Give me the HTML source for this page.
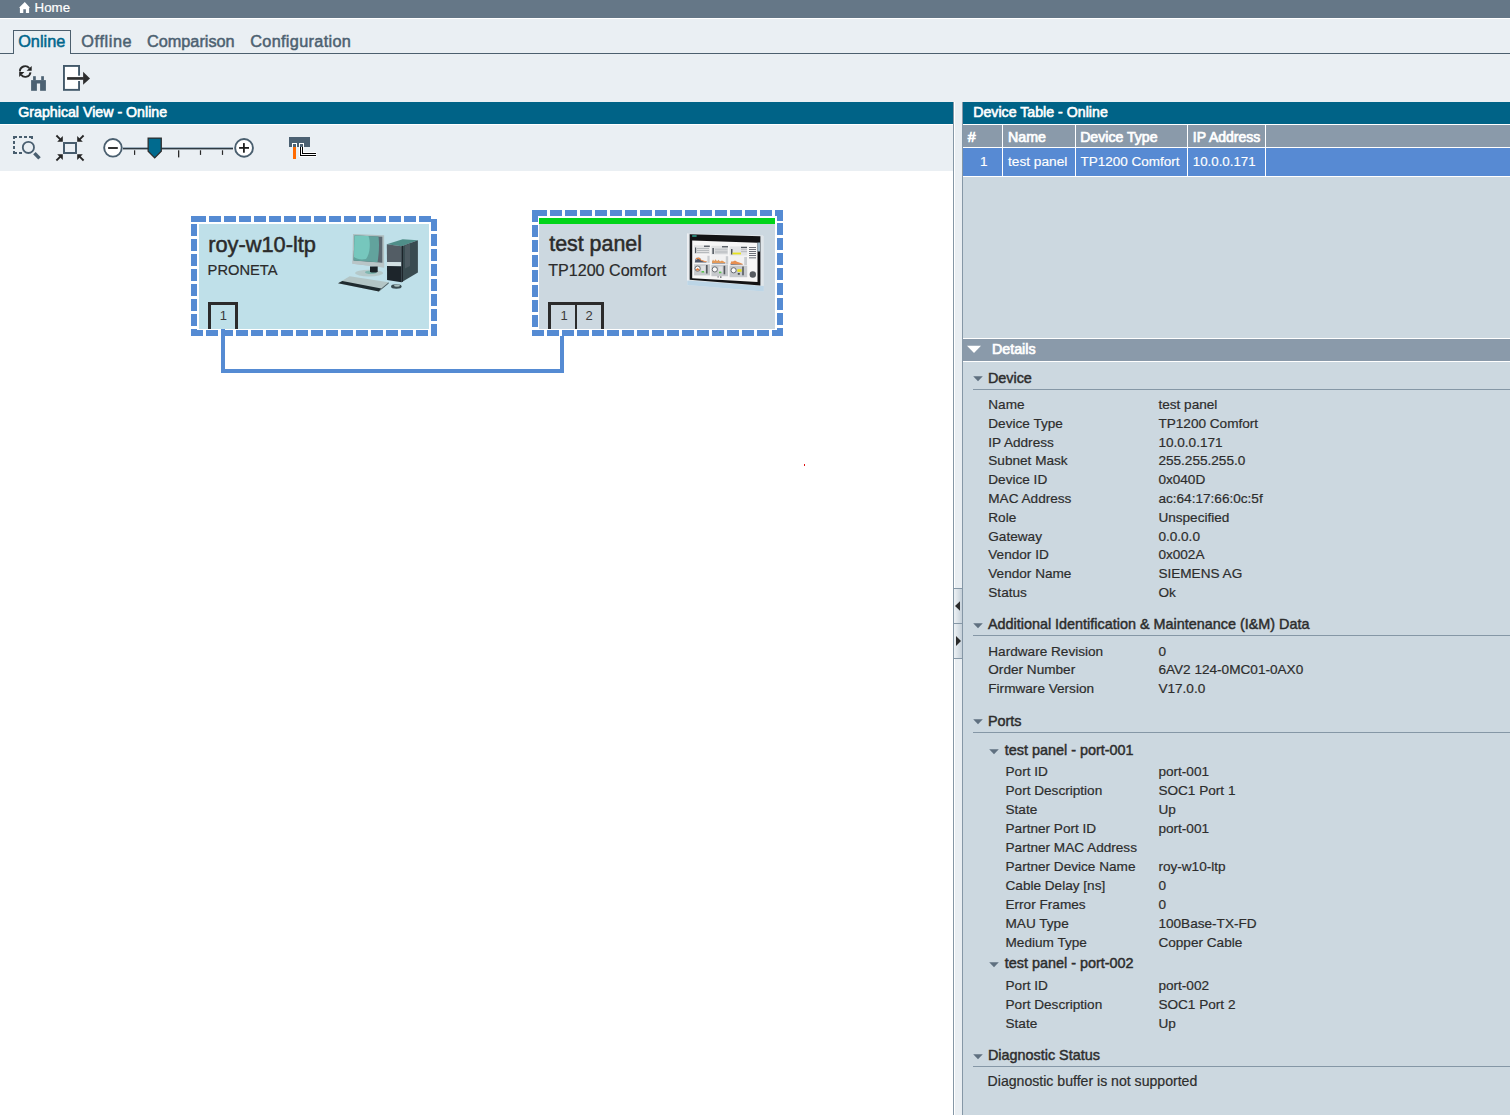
<!DOCTYPE html>
<html><head><meta charset="utf-8"><style>
html,body{margin:0;padding:0;}
body{width:1510px;height:1115px;position:relative;overflow:hidden;background:#fff;font-family:"Liberation Sans", sans-serif;}
.t{position:absolute;white-space:nowrap;font-family:"Liberation Sans", sans-serif;}
svg{overflow:visible}
</style></head><body>
<div style="position:absolute;left:0px;top:0px;width:1510px;height:18px;background:#657787;"></div>
<div style="position:absolute;left:0px;top:18px;width:1510px;height:1px;background:#ffffff;"></div>
<div style="position:absolute;left:0px;top:19px;width:1510px;height:83px;background:#eaeff3;"></div>
<svg style="position:absolute;left:0px;top:0px" width="40" height="18" viewBox="0 0 40 18"><path d="M24.8 2.1 L30 7.8 L29.1 7.8 V13 H25.9 V9.3 H23.3 V13 H19.9 V7.8 H19 Z" fill="#fff"/></svg>
<div class="t" style="left:34.60px;top:0.74px;font-size:13.3px;line-height:13.3px;font-weight:400;color:#ffffff;-webkit-text-stroke:0.2px #ffffff;">Home</div>
<div style="position:absolute;left:0px;top:53px;width:13px;height:1px;background:#4c5f6e;"></div>
<div style="position:absolute;left:71px;top:53px;width:1439px;height:1px;background:#4c5f6e;"></div>
<div style="position:absolute;left:13px;top:30px;width:56px;height:23px;border:1px solid #4c5f6e;border-bottom:none;background:#eaeff3"></div>
<div class="t" style="left:18.20px;top:33.20px;font-size:16.3px;line-height:16.3px;font-weight:400;color:#00668c;-webkit-text-stroke:0.5px #00668c;">Online</div>
<div class="t" style="left:81.30px;top:33.20px;font-size:16.3px;line-height:16.3px;font-weight:400;color:#4d6171;letter-spacing:0.6px;-webkit-text-stroke:0.5px #4d6171;">Offline</div>
<div class="t" style="left:146.90px;top:33.20px;font-size:16.3px;line-height:16.3px;font-weight:400;color:#4d6171;-webkit-text-stroke:0.5px #4d6171;">Comparison</div>
<div class="t" style="left:250.20px;top:33.20px;font-size:16.3px;line-height:16.3px;font-weight:400;color:#4d6171;letter-spacing:0.32px;-webkit-text-stroke:0.5px #4d6171;">Configuration</div>
<svg style="position:absolute;left:14px;top:60px" width="36" height="35" viewBox="0 0 36 35">
<path d="M5.9 11.5 A5.3 5.3 0 0 1 15.26 8.09" fill="none" stroke="#2a2a2a" stroke-width="1.9"/>
<path d="M17.7 6 L17.7 10.8 L12.6 10.8 Z" fill="#222"/>
<path d="M16.5 12.3 A5.3 5.3 0 0 1 7.14 14.91" fill="none" stroke="#2a2a2a" stroke-width="1.9"/>
<path d="M5.2 12.1 L5.2 17.1 L10.4 12.1 Z" fill="#222"/>
<rect x="19.1" y="16.2" width="2.7" height="4" fill="#4c6172"/>
<rect x="27.2" y="16.2" width="2.7" height="4" fill="#4c6172"/>
<rect x="17.1" y="20.1" width="14.8" height="10.7" fill="#4c6172"/>
<rect x="22.9" y="23.5" width="3.2" height="7.5" fill="#eaeff3"/>
</svg>
<svg style="position:absolute;left:58px;top:60px" width="36" height="35" viewBox="0 0 36 35">
<rect x="5.95" y="5.95" width="15.1" height="23.9" fill="#fff" stroke="#43596a" stroke-width="1.9"/>
<rect x="19.9" y="15.7" width="2.4" height="5.3" fill="#fff"/>
<rect x="9.1" y="17.1" width="16.5" height="2.7" fill="#2e2e2e"/>
<path d="M25.1 11.8 L32 18.4 L25.1 24.8 Z" fill="#2e2e2e"/>
</svg>
<div style="position:absolute;left:0px;top:102px;width:953px;height:22px;background:#006387;"></div>
<div style="position:absolute;left:0px;top:124px;width:953px;height:1px;background:#ffffff;"></div>
<div style="position:absolute;left:0px;top:125px;width:953px;height:46px;background:#eaeff3;"></div>
<div style="position:absolute;left:0px;top:171px;width:953px;height:944px;background:#ffffff;"></div>
<div class="t" style="left:18.30px;top:104.88px;font-size:14.2px;line-height:14.2px;font-weight:400;color:#ffffff;-webkit-text-stroke:0.6px #ffffff;">Graphical View - Online</div>
<div style="position:absolute;left:953px;top:102px;width:1px;height:1013px;background:#8597a6;"></div>
<div style="position:absolute;left:954px;top:102px;width:1px;height:1013px;background:#ffffff;"></div>
<div style="position:absolute;left:955px;top:102px;width:7px;height:1013px;background:#e9eef2;"></div>
<div style="position:absolute;left:962px;top:102px;width:1px;height:1013px;background:#8597a6;"></div>
<svg style="position:absolute;left:8px;top:130px" width="36" height="35" viewBox="0 0 36 35">
<g fill="#485d6e">
<rect x="5" y="6" width="4" height="2"/><rect x="5" y="6" width="2" height="3"/>
<rect x="11" y="6" width="3" height="2"/><rect x="16" y="6" width="3" height="2"/>
<rect x="21" y="6" width="4" height="2"/><rect x="23" y="6" width="2" height="3"/>
<rect x="5" y="11" width="2" height="3"/><rect x="5" y="16" width="2" height="3"/>
<rect x="5" y="21" width="2" height="3"/><rect x="5" y="22" width="4" height="2"/>
<rect x="11" y="22" width="3" height="2"/>
</g>
<circle cx="20.4" cy="17.4" r="5.6" fill="none" stroke="#4a5f70" stroke-width="1.8"/>
<path d="M26.4 23.1 L31.5 28.4" stroke="#4a5f70" stroke-width="3.5"/>
</svg>
<svg style="position:absolute;left:52px;top:130px" width="36" height="35" viewBox="0 0 36 35">
<rect x="12" y="13" width="12" height="10" fill="none" stroke="#475c6d" stroke-width="2"/>
<path d="M4.4 5.5 L8.6 9.7" stroke="#262626" stroke-width="1.8"/><path d="M5.2 11.8 L10.8 11.8 L10.8 6.1 Z" fill="#262626"/>
<path d="M31.6 5.5 L27.4 9.7" stroke="#262626" stroke-width="1.8"/><path d="M30.8 11.8 L25.2 11.8 L25.2 6.1 Z" fill="#262626"/>
<path d="M4.4 30.5 L8.6 26.3" stroke="#262626" stroke-width="1.8"/><path d="M5.2 24.2 L10.8 24.2 L10.8 29.9 Z" fill="#262626"/>
<path d="M31.6 30.5 L27.4 26.3" stroke="#262626" stroke-width="1.8"/><path d="M30.8 24.2 L25.2 24.2 L25.2 29.9 Z" fill="#262626"/>
</svg>
<svg style="position:absolute;left:100px;top:133px" width="160" height="30" viewBox="0 0 160 30">
<rect x="23" y="14.3" width="110" height="0.9" fill="#7f98a8"/>
<rect x="23" y="15" width="110" height="1.4" fill="#2f3a42"/>
<rect x="34" y="17.3" width="1.2" height="4.6" fill="#2a2a2a"/>
<rect x="78" y="17.3" width="1.3" height="7.1" fill="#2a2a2a"/>
<rect x="99.9" y="17.3" width="1.2" height="4.6" fill="#2a2a2a"/>
<rect x="121.9" y="17.3" width="1.2" height="4.6" fill="#2a2a2a"/>
<circle cx="12.95" cy="14.85" r="8.8" fill="#fff" stroke="#4a5f6f" stroke-width="1.9"/>
<rect x="8.1" y="14.1" width="9.7" height="1.8" fill="#1e1e1e"/>
<circle cx="144.05" cy="14.9" r="8.9" fill="#fff" stroke="#4a5f6f" stroke-width="1.9"/>
<rect x="139.1" y="14" width="9.9" height="1.8" fill="#1e1e1e"/>
<rect x="143" y="10.1" width="1.8" height="9.6" fill="#1e1e1e"/>
<path d="M48.15 5.05 H61.25 V18.3 L54.7 24.9 L48.15 18.3 Z" fill="#006a8e" stroke="#2e2e2e" stroke-width="1.3"/>
</svg>
<svg style="position:absolute;left:284px;top:132px" width="36" height="32" viewBox="0 0 36 32">
<rect x="5" y="5" width="21" height="10" fill="#4c6172"/>
<rect x="8" y="11" width="5" height="4" fill="#fff"/><rect x="9" y="12" width="3" height="3" fill="#4c6172"/>
<rect x="15" y="11" width="5" height="4" fill="#fff"/><rect x="16" y="12" width="3" height="3" fill="#4c6172"/>
<rect x="9" y="15" width="3" height="12" fill="#ff6a00"/>
<path d="M15 15 H20 V20 H32.5 V25 H15 Z" fill="#fff"/>
<path d="M16 15 V24 H32 V23 H17 V15 Z" fill="#000"/>
<path d="M18 15 V22 H32 V21 H19 V15 Z" fill="#000"/>
</svg>
<div style="position:absolute;left:199px;top:224px;width:230px;height:105px;background:#bfe0e9;"></div>
<div style="position:absolute;left:191px;top:216px;width:15px;height:6px;background:#558bd3;"></div>
<div style="position:absolute;left:209px;top:216px;width:12px;height:6px;background:#558bd3;"></div>
<div style="position:absolute;left:224px;top:216px;width:12px;height:6px;background:#558bd3;"></div>
<div style="position:absolute;left:239px;top:216px;width:12px;height:6px;background:#558bd3;"></div>
<div style="position:absolute;left:254px;top:216px;width:12px;height:6px;background:#558bd3;"></div>
<div style="position:absolute;left:269px;top:216px;width:12px;height:6px;background:#558bd3;"></div>
<div style="position:absolute;left:284px;top:216px;width:12px;height:6px;background:#558bd3;"></div>
<div style="position:absolute;left:299px;top:216px;width:12px;height:6px;background:#558bd3;"></div>
<div style="position:absolute;left:314px;top:216px;width:12px;height:6px;background:#558bd3;"></div>
<div style="position:absolute;left:329px;top:216px;width:12px;height:6px;background:#558bd3;"></div>
<div style="position:absolute;left:344px;top:216px;width:12px;height:6px;background:#558bd3;"></div>
<div style="position:absolute;left:359px;top:216px;width:12px;height:6px;background:#558bd3;"></div>
<div style="position:absolute;left:374px;top:216px;width:12px;height:6px;background:#558bd3;"></div>
<div style="position:absolute;left:389px;top:216px;width:12px;height:6px;background:#558bd3;"></div>
<div style="position:absolute;left:404px;top:216px;width:12px;height:6px;background:#558bd3;"></div>
<div style="position:absolute;left:419px;top:216px;width:12px;height:6px;background:#558bd3;"></div>
<div style="position:absolute;left:431px;top:219px;width:6px;height:12px;background:#558bd3;"></div>
<div style="position:absolute;left:431px;top:234px;width:6px;height:12px;background:#558bd3;"></div>
<div style="position:absolute;left:431px;top:249px;width:6px;height:12px;background:#558bd3;"></div>
<div style="position:absolute;left:431px;top:264px;width:6px;height:12px;background:#558bd3;"></div>
<div style="position:absolute;left:431px;top:279px;width:6px;height:12px;background:#558bd3;"></div>
<div style="position:absolute;left:431px;top:294px;width:6px;height:12px;background:#558bd3;"></div>
<div style="position:absolute;left:431px;top:309px;width:6px;height:12px;background:#558bd3;"></div>
<div style="position:absolute;left:431px;top:324px;width:6px;height:12px;background:#558bd3;"></div>
<div style="position:absolute;left:191px;top:330px;width:12px;height:6px;background:#558bd3;"></div>
<div style="position:absolute;left:206px;top:330px;width:12px;height:6px;background:#558bd3;"></div>
<div style="position:absolute;left:221px;top:330px;width:12px;height:6px;background:#558bd3;"></div>
<div style="position:absolute;left:236px;top:330px;width:12px;height:6px;background:#558bd3;"></div>
<div style="position:absolute;left:251px;top:330px;width:12px;height:6px;background:#558bd3;"></div>
<div style="position:absolute;left:266px;top:330px;width:12px;height:6px;background:#558bd3;"></div>
<div style="position:absolute;left:281px;top:330px;width:12px;height:6px;background:#558bd3;"></div>
<div style="position:absolute;left:296px;top:330px;width:12px;height:6px;background:#558bd3;"></div>
<div style="position:absolute;left:311px;top:330px;width:12px;height:6px;background:#558bd3;"></div>
<div style="position:absolute;left:326px;top:330px;width:12px;height:6px;background:#558bd3;"></div>
<div style="position:absolute;left:341px;top:330px;width:12px;height:6px;background:#558bd3;"></div>
<div style="position:absolute;left:356px;top:330px;width:12px;height:6px;background:#558bd3;"></div>
<div style="position:absolute;left:371px;top:330px;width:12px;height:6px;background:#558bd3;"></div>
<div style="position:absolute;left:386px;top:330px;width:12px;height:6px;background:#558bd3;"></div>
<div style="position:absolute;left:401px;top:330px;width:12px;height:6px;background:#558bd3;"></div>
<div style="position:absolute;left:416px;top:330px;width:12px;height:6px;background:#558bd3;"></div>
<div style="position:absolute;left:431px;top:330px;width:6px;height:6px;background:#558bd3;"></div>
<div style="position:absolute;left:191px;top:224px;width:6px;height:12px;background:#558bd3;"></div>
<div style="position:absolute;left:191px;top:239px;width:6px;height:12px;background:#558bd3;"></div>
<div style="position:absolute;left:191px;top:254px;width:6px;height:12px;background:#558bd3;"></div>
<div style="position:absolute;left:191px;top:269px;width:6px;height:12px;background:#558bd3;"></div>
<div style="position:absolute;left:191px;top:284px;width:6px;height:12px;background:#558bd3;"></div>
<div style="position:absolute;left:191px;top:299px;width:6px;height:12px;background:#558bd3;"></div>
<div style="position:absolute;left:191px;top:314px;width:6px;height:12px;background:#558bd3;"></div>
<div style="position:absolute;left:191px;top:329px;width:6px;height:7px;background:#558bd3;"></div>
<div style="position:absolute;left:539px;top:224px;width:236px;height:105px;background:#ccd8e0;"></div>
<div style="position:absolute;left:539px;top:218px;width:236px;height:6px;background:#00d41a;"></div>
<div style="position:absolute;left:532px;top:210px;width:15px;height:6px;background:#558bd3;"></div>
<div style="position:absolute;left:550px;top:210px;width:12px;height:6px;background:#558bd3;"></div>
<div style="position:absolute;left:565px;top:210px;width:12px;height:6px;background:#558bd3;"></div>
<div style="position:absolute;left:580px;top:210px;width:12px;height:6px;background:#558bd3;"></div>
<div style="position:absolute;left:595px;top:210px;width:12px;height:6px;background:#558bd3;"></div>
<div style="position:absolute;left:610px;top:210px;width:12px;height:6px;background:#558bd3;"></div>
<div style="position:absolute;left:625px;top:210px;width:12px;height:6px;background:#558bd3;"></div>
<div style="position:absolute;left:640px;top:210px;width:12px;height:6px;background:#558bd3;"></div>
<div style="position:absolute;left:655px;top:210px;width:12px;height:6px;background:#558bd3;"></div>
<div style="position:absolute;left:670px;top:210px;width:12px;height:6px;background:#558bd3;"></div>
<div style="position:absolute;left:685px;top:210px;width:12px;height:6px;background:#558bd3;"></div>
<div style="position:absolute;left:700px;top:210px;width:12px;height:6px;background:#558bd3;"></div>
<div style="position:absolute;left:715px;top:210px;width:12px;height:6px;background:#558bd3;"></div>
<div style="position:absolute;left:730px;top:210px;width:12px;height:6px;background:#558bd3;"></div>
<div style="position:absolute;left:745px;top:210px;width:12px;height:6px;background:#558bd3;"></div>
<div style="position:absolute;left:760px;top:210px;width:12px;height:6px;background:#558bd3;"></div>
<div style="position:absolute;left:775px;top:210px;width:8px;height:6px;background:#558bd3;"></div>
<div style="position:absolute;left:777px;top:210px;width:6px;height:11px;background:#558bd3;"></div>
<div style="position:absolute;left:777px;top:223px;width:6px;height:12px;background:#558bd3;"></div>
<div style="position:absolute;left:777px;top:238px;width:6px;height:12px;background:#558bd3;"></div>
<div style="position:absolute;left:777px;top:253px;width:6px;height:12px;background:#558bd3;"></div>
<div style="position:absolute;left:777px;top:268px;width:6px;height:12px;background:#558bd3;"></div>
<div style="position:absolute;left:777px;top:283px;width:6px;height:12px;background:#558bd3;"></div>
<div style="position:absolute;left:777px;top:298px;width:6px;height:12px;background:#558bd3;"></div>
<div style="position:absolute;left:777px;top:313px;width:6px;height:12px;background:#558bd3;"></div>
<div style="position:absolute;left:777px;top:328px;width:6px;height:8px;background:#558bd3;"></div>
<div style="position:absolute;left:532px;top:330px;width:12px;height:6px;background:#558bd3;"></div>
<div style="position:absolute;left:547px;top:330px;width:12px;height:6px;background:#558bd3;"></div>
<div style="position:absolute;left:562px;top:330px;width:12px;height:6px;background:#558bd3;"></div>
<div style="position:absolute;left:577px;top:330px;width:12px;height:6px;background:#558bd3;"></div>
<div style="position:absolute;left:592px;top:330px;width:12px;height:6px;background:#558bd3;"></div>
<div style="position:absolute;left:607px;top:330px;width:12px;height:6px;background:#558bd3;"></div>
<div style="position:absolute;left:622px;top:330px;width:12px;height:6px;background:#558bd3;"></div>
<div style="position:absolute;left:637px;top:330px;width:12px;height:6px;background:#558bd3;"></div>
<div style="position:absolute;left:652px;top:330px;width:12px;height:6px;background:#558bd3;"></div>
<div style="position:absolute;left:667px;top:330px;width:12px;height:6px;background:#558bd3;"></div>
<div style="position:absolute;left:682px;top:330px;width:12px;height:6px;background:#558bd3;"></div>
<div style="position:absolute;left:697px;top:330px;width:12px;height:6px;background:#558bd3;"></div>
<div style="position:absolute;left:712px;top:330px;width:12px;height:6px;background:#558bd3;"></div>
<div style="position:absolute;left:727px;top:330px;width:12px;height:6px;background:#558bd3;"></div>
<div style="position:absolute;left:742px;top:330px;width:12px;height:6px;background:#558bd3;"></div>
<div style="position:absolute;left:757px;top:330px;width:12px;height:6px;background:#558bd3;"></div>
<div style="position:absolute;left:772px;top:330px;width:11px;height:6px;background:#558bd3;"></div>
<div style="position:absolute;left:532px;top:210px;width:6px;height:12px;background:#558bd3;"></div>
<div style="position:absolute;left:532px;top:225px;width:6px;height:12px;background:#558bd3;"></div>
<div style="position:absolute;left:532px;top:240px;width:6px;height:12px;background:#558bd3;"></div>
<div style="position:absolute;left:532px;top:255px;width:6px;height:12px;background:#558bd3;"></div>
<div style="position:absolute;left:532px;top:270px;width:6px;height:12px;background:#558bd3;"></div>
<div style="position:absolute;left:532px;top:285px;width:6px;height:12px;background:#558bd3;"></div>
<div style="position:absolute;left:532px;top:300px;width:6px;height:12px;background:#558bd3;"></div>
<div style="position:absolute;left:532px;top:315px;width:6px;height:12px;background:#558bd3;"></div>
<div style="position:absolute;left:532px;top:330px;width:6px;height:6px;background:#558bd3;"></div>
<div style="position:absolute;left:221px;top:329px;width:4px;height:44px;background:#558bd3;"></div>
<div style="position:absolute;left:560px;top:336px;width:4px;height:37px;background:#558bd3;"></div>
<div style="position:absolute;left:221px;top:369px;width:343px;height:4px;background:#558bd3;"></div>
<div style="position:absolute;left:208px;top:302px;width:24px;height:24px;border:3px solid #2b2b2b;border-bottom:none"></div>
<div class="t" style="left:219.80px;top:308.90px;font-size:13px;line-height:13px;font-weight:400;color:#3a3a3a;">1</div>
<div style="position:absolute;left:548px;top:302px;width:50px;height:24px;border:3px solid #2b2b2b;border-bottom:none"></div>
<div style="position:absolute;left:575px;top:305px;width:2px;height:24px;background:#2b2b2b;"></div>
<div class="t" style="left:560.50px;top:308.90px;font-size:13px;line-height:13px;font-weight:400;color:#3a3a3a;">1</div>
<div class="t" style="left:585.50px;top:308.90px;font-size:13px;line-height:13px;font-weight:400;color:#3a3a3a;">2</div>
<div class="t" style="left:208.20px;top:233.85px;font-size:21.8px;line-height:21.8px;font-weight:400;color:#2b2b2b;-webkit-text-stroke:0.5px #2b2b2b;">roy-w10-ltp</div>
<div class="t" style="left:207.60px;top:263.36px;font-size:14.7px;line-height:14.7px;font-weight:400;color:#2b2b2b;-webkit-text-stroke:0.2px #2b2b2b;">PRONETA</div>
<div class="t" style="left:549.20px;top:234.28px;font-size:21.4px;line-height:21.4px;font-weight:400;color:#2b2b2b;-webkit-text-stroke:0.5px #2b2b2b;">test panel</div>
<div class="t" style="left:548.20px;top:262.17px;font-size:16.1px;line-height:16.1px;font-weight:400;color:#2b2b2b;-webkit-text-stroke:0.2px #2b2b2b;">TP1200 Comfort</div>
<div style="position:absolute;left:804px;top:464px;width:1px;height:2px;background:#e01010;"></div>
<svg style="position:absolute;left:335px;top:228px" width="90" height="68" viewBox="0 0 90 68">
<path d="M18 6.1 L49.1 7.3 L49.1 39.6 L17.4 35.7 Z" fill="#b0bfc1"/>
<path d="M19.5 7.6 L47.3 8.8 L47.3 34.8 L18.6 32.6 Z" fill="#5b6770"/>
<path d="M19.5 7.6 L43.5 8.6 C44.5 16 44 26 42.5 34.3 L18.6 32.6 Z" fill="#62a39d"/>
<path d="M19.5 7.6 L33.5 8.1 C35.5 14 35.5 25 31 31 C27 31.8 22 31.5 19 29 Z" fill="#76c7bd"/>
<path d="M17.4 33 L49.1 35.3 L49.1 39.6 L17.4 35.7 Z" fill="#b9c5c7"/>
<ellipse cx="34.1" cy="45.1" rx="14" ry="3.3" fill="#b5c9ca"/>
<ellipse cx="36" cy="44.3" rx="6" ry="1.8" fill="#7fb6b0"/>
<path d="M35 38.4 L42.7 38.6 L42.7 43.9 C40 44.8 37 44.8 35 43.9 Z" fill="#1b2328"/>
<path d="M51.8 16.2 L67.7 11.3 L82.9 12.2 L66.5 18.3 Z" fill="#4f8e89"/>
<path d="M51.8 16.2 L66.5 18.3 L66.5 34.3 L52 34.1 Z" fill="#535d65"/>
<path d="M52 34.1 L66.5 34.3 L66.5 38.3 L52 38.1 Z" fill="#d3e0e2"/>
<path d="M52 38.1 L66.5 38.3 L66.5 54.3 L52.1 52.1 Z" fill="#1d252b"/>
<path d="M66.5 18.3 L82.9 12.2 L82.9 44.5 L66.5 54.3 Z" fill="#394b50"/>
<path d="M70 17.5 L75 15.6 L75 38 L70 40.5 Z" fill="#4c5a61"/>
<path d="M66.5 18.3 L68 17.8 L68 53.4 L66.5 54.3 Z" fill="#1d252b"/>
<path d="M3 55.2 L14.6 48.2 L53.7 54.3 L43.9 63.4 Z" fill="#b3c5c5"/>
<path d="M3 55.2 L7.3 53 L46.3 60.4 L43.9 63.4 Z" fill="#1f2b2f"/>
<path d="M46.3 60.4 L53.7 54.3 L53.7 55.5 L43.9 63.4 Z" fill="#4a5a5e"/>
<ellipse cx="61.3" cy="58.5" rx="5.3" ry="2.2" fill="#3a4c51"/>
<ellipse cx="62" cy="57.6" rx="3" ry="1.2" fill="#a9c0c0"/>
</svg>
<svg style="position:absolute;left:680px;top:228px" width="90" height="70" viewBox="0 0 90 70">
<path d="M7.2 5.6 L83.8 7.2 L83.8 63.4 L7.2 57.1 Z" fill="#dfe5e9"/>
<path d="M7.2 5.6 L8.4 5.6 L8.4 57.2 L7.2 57.1 Z" fill="#f4f6f8"/>
<path d="M7.2 52.4 L83.8 58 L83.8 63.4 L7.2 57.1 Z" fill="#bcd5e6"/>
<path d="M9.7 6.3 L80.4 8.2 L80.4 57.4 L9.7 51.8 Z" fill="#121214"/>
<path d="M12.2 12.6 L77.5 14.8 L77.5 54 L12.2 50.2 Z" fill="#f6f6f6"/>
<rect x="12.2" y="7.2" width="4.4" height="1.6" fill="#2a9a8a"/>
<rect x="77.5" y="14.5" width="2.6" height="9" fill="#9fb8c8"/>
<g>
<rect x="14.1" y="17.3" width="15.7" height="8.6" fill="#e2e3e4"/>
<rect x="24" y="17.6" width="5.8" height="1.3" fill="#4f555c"/>
<rect x="15" y="19.5" width="1.2" height="5.6" fill="#4f555c"/>
<rect x="17" y="20.2" width="12" height="0.6" fill="#9a9ea3"/><rect x="17" y="22.2" width="12" height="0.6" fill="#9a9ea3"/><rect x="17" y="24" width="12" height="0.6" fill="#9a9ea3"/>
<rect x="31.4" y="17.8" width="16.6" height="8.8" fill="#e2e3e4"/>
<rect x="42" y="18.1" width="6" height="1.3" fill="#4f555c"/>
<rect x="32.4" y="20" width="1.5" height="6" fill="#4f555c"/>
<rect x="35" y="20.8" width="12.5" height="0.6" fill="#9a9ea3"/><rect x="35" y="22.8" width="12.5" height="0.6" fill="#9a9ea3"/><rect x="35" y="24.6" width="12.5" height="0.6" fill="#9a9ea3"/>
<rect x="49.6" y="18.4" width="17.6" height="9.2" fill="#e2e3e4"/>
<rect x="61" y="18.8" width="6" height="1.3" fill="#4f555c"/>
<rect x="51" y="21" width="1.5" height="5.5" fill="#4f555c"/>
<rect x="52.5" y="24.6" width="8.5" height="1.8" fill="#e6e21c"/>
<rect x="61" y="21.5" width="6" height="0.6" fill="#9a9ea3"/><rect x="61" y="23.5" width="6" height="0.6" fill="#9a9ea3"/>
<rect x="14.1" y="26.8" width="16" height="8.6" fill="#f2f2f2"/>
<path d="M14.8 34.4 L15.6 30.6 L16.5 32 L17.6 29.2 L18.8 31.2 L20 30 L21.5 32.5 L23 33 L25.5 34 L26.5 33.4 L26.5 34.6 L14.8 34.6 Z" fill="#50586a"/>
<path d="M15.6 30.8 L16.6 29.6 L17.6 30.4 L18.8 28.9 L20.2 30.6 L21 31.8 L23.5 32.4 L25.5 33.3 L26.5 33 L26.5 34 L25 33.9 L22.5 33.2 L20 31.9 L18.5 30.8 L17 31.5 Z" fill="#e88a4a"/>
<rect x="27.4" y="27.8" width="2.2" height="7" fill="#c9cccf"/>
<rect x="31.4" y="27.2" width="16.6" height="9" fill="#f2f2f2"/>
<path d="M32 35.5 L32.8 32.5 L34 34 L35.4 32 L36.8 34 L38.5 32.4 L40 34.2 L42 33.2 L44.5 34.6 L45.5 35.5 Z" fill="#50586a"/>
<path d="M32 34.2 L33 31.6 L34.3 33.2 L35.5 31.3 L37 33.2 L38.5 31.8 L40 33.5 L42 32.6 L44.5 34 L45.5 34.6 L45.5 35 L32 35 Z" fill="#e59a58"/>
<rect x="45.8" y="28.2" width="2.4" height="8.2" fill="#c9cccf"/>
<rect x="49.6" y="28" width="17.6" height="9.3" fill="#f2f2f2"/>
<path d="M50.6 36.2 L51.5 33.8 L53 34.2 L55 33 L57 34.5 L60 35.5 L63 36.6 L50.6 36.8 Z" fill="#50586a"/>
<path d="M50.6 35.2 L51.6 33.2 L53 33.6 L55 32.5 L57 33.8 L60 34.8 L63 36 L63 36.4 L50.6 36 Z" fill="#e88f52"/>
<rect x="64.2" y="29" width="2.8" height="8" fill="#c9cccf"/>
<rect x="14.1" y="36.2" width="16" height="11.2" fill="#c6c9cc"/>
<circle cx="17.6" cy="40.6" r="2.6" fill="#fafafa" stroke="#5a5e64" stroke-width="0.9"/>
<path d="M15.8 41.5 L17.6 40 L19.4 41.5 L19 42.6 L16.2 42.6 Z" fill="#e07a3c"/>
<rect x="21.2" y="37.8" width="4" height="6" fill="#dfe1e3"/>
<rect x="26" y="37" width="1.6" height="8.5" fill="#55595f"/>
<rect x="21.5" y="43" width="2.6" height="1.6" fill="#5cc050"/>
<rect x="31.4" y="36.8" width="16.6" height="11.4" fill="#c6c9cc"/>
<circle cx="34.8" cy="41.4" r="2.6" fill="#fafafa" stroke="#5a5e64" stroke-width="0.9"/>
<rect x="38.5" y="38.5" width="4" height="6" fill="#dfe1e3"/>
<rect x="43.6" y="37.8" width="1.6" height="8.5" fill="#55595f"/>
<rect x="39" y="43.6" width="2.4" height="1.6" fill="#5cc050"/>
<rect x="49.6" y="37.6" width="17.6" height="11.6" fill="#c6c9cc"/>
<circle cx="53.6" cy="42.3" r="2.6" fill="#fafafa" stroke="#5a5e64" stroke-width="0.9"/>
<rect x="57.4" y="41.2" width="4.2" height="2.6" fill="#e6e21c"/>
<rect x="62.2" y="38.5" width="1.6" height="8.8" fill="#55595f"/>
<rect x="57.8" y="45.2" width="2" height="1.4" fill="#2a2e34"/>
<rect x="69" y="19" width="7" height="0.9" fill="#5e636b"/><rect x="69" y="21" width="7" height="0.9" fill="#5e636b"/>
<rect x="69" y="23" width="7" height="0.9" fill="#5e636b"/><rect x="69" y="25" width="7" height="0.9" fill="#5e636b"/>
<rect x="69" y="27" width="7" height="0.9" fill="#5e636b"/><rect x="69" y="29.4" width="7" height="0.9" fill="#5e636b"/>
<circle cx="72.8" cy="46.5" r="3.2" fill="#55595f"/>
<rect x="37.5" y="48.3" width="1.2" height="1.2" fill="#6a6e74"/><rect x="40.2" y="48.5" width="1.2" height="1.2" fill="#2a2e34"/>
</g>
</svg>
<div style="position:absolute;left:963px;top:102px;width:547px;height:22px;background:#006387;"></div>
<div style="position:absolute;left:963px;top:124px;width:547px;height:1px;background:#ffffff;"></div>
<div style="position:absolute;left:963px;top:125px;width:547px;height:22px;background:#8a9aaa;"></div>
<div style="position:absolute;left:963px;top:147px;width:547px;height:1px;background:#ffffff;"></div>
<div style="position:absolute;left:963px;top:148px;width:547px;height:28px;background:#578ad3;"></div>
<div style="position:absolute;left:963px;top:176px;width:547px;height:1px;background:#ffffff;"></div>
<div style="position:absolute;left:963px;top:177px;width:547px;height:161px;background:#ccd8e0;"></div>
<div style="position:absolute;left:963px;top:338px;width:547px;height:1px;background:#ffffff;"></div>
<div style="position:absolute;left:963px;top:339px;width:547px;height:22px;background:#8a9aaa;"></div>
<div style="position:absolute;left:963px;top:361px;width:547px;height:1px;background:#ffffff;"></div>
<div style="position:absolute;left:963px;top:362px;width:547px;height:753px;background:#ccd8e0;"></div>
<div style="position:absolute;left:1002px;top:125px;width:1px;height:51px;background:#ffffff;"></div>
<div style="position:absolute;left:1075px;top:125px;width:1px;height:51px;background:#ffffff;"></div>
<div style="position:absolute;left:1187px;top:125px;width:1px;height:51px;background:#ffffff;"></div>
<div style="position:absolute;left:1265px;top:125px;width:1px;height:51px;background:#ffffff;"></div>
<div class="t" style="left:973.20px;top:104.88px;font-size:14.2px;line-height:14.2px;font-weight:400;color:#ffffff;-webkit-text-stroke:0.6px #ffffff;">Device Table - Online</div>
<div class="t" style="left:967.80px;top:129.68px;font-size:14.2px;line-height:14.2px;font-weight:400;color:#ffffff;-webkit-text-stroke:0.7px #ffffff;">#</div>
<div class="t" style="left:1008.00px;top:129.68px;font-size:14.2px;line-height:14.2px;font-weight:400;color:#ffffff;-webkit-text-stroke:0.7px #ffffff;">Name</div>
<div class="t" style="left:1080.20px;top:129.76px;font-size:14.1px;line-height:14.1px;font-weight:400;color:#ffffff;-webkit-text-stroke:0.7px #ffffff;">Device Type</div>
<div class="t" style="left:1192.80px;top:129.85px;font-size:14px;line-height:14px;font-weight:400;color:#ffffff;-webkit-text-stroke:0.7px #ffffff;">IP Address</div>
<div class="t" style="left:980.00px;top:155.09px;font-size:13.6px;line-height:13.6px;font-weight:400;color:#ffffff;-webkit-text-stroke:0.15px #fff;">1</div>
<div class="t" style="left:1008.00px;top:155.00px;font-size:13.7px;line-height:13.7px;font-weight:400;color:#ffffff;-webkit-text-stroke:0.15px #fff;">test panel</div>
<div class="t" style="left:1080.50px;top:155.17px;font-size:13.5px;line-height:13.5px;font-weight:400;color:#ffffff;-webkit-text-stroke:0.15px #fff;">TP1200 Comfort</div>
<div class="t" style="left:1192.80px;top:155.14px;font-size:13.3px;line-height:13.3px;font-weight:400;color:#ffffff;-webkit-text-stroke:0.15px #fff;">10.0.0.171</div>
<svg style="position:absolute;left:966px;top:345px" width="16" height="9" viewBox="0 0 16 9"><path d="M1 0.8 H15 L8 8 Z" fill="#fff"/></svg>
<div class="t" style="left:991.90px;top:341.80px;font-size:14.3px;line-height:14.3px;font-weight:400;color:#ffffff;-webkit-text-stroke:0.7px #ffffff;">Details</div>
<svg style="position:absolute;left:973px;top:376px" width="10.6" height="6" viewBox="0 0 10.6 6"><path d="M0.2 0.2 H9.799999999999999 L5.0 5.2 Z" fill="#5f7080"/></svg>
<div class="t" style="left:987.90px;top:370.61px;font-size:14.4px;line-height:14.4px;font-weight:400;color:#2d2d2d;-webkit-text-stroke:0.45px #2d2d2d;">Device</div>
<div style="position:absolute;left:973px;top:389px;width:537px;height:1px;background:#8597a6;"></div>
<div class="t" style="left:988.30px;top:398.19px;font-size:13.6px;line-height:13.6px;font-weight:400;color:#2d2d2d;-webkit-text-stroke:0.2px #2d2d2d;">Name</div>
<div class="t" style="left:1158.40px;top:398.19px;font-size:13.6px;line-height:13.6px;font-weight:400;color:#2d2d2d;-webkit-text-stroke:0.2px #2d2d2d;">test panel</div>
<div class="t" style="left:988.30px;top:416.95px;font-size:13.6px;line-height:13.6px;font-weight:400;color:#2d2d2d;-webkit-text-stroke:0.2px #2d2d2d;">Device Type</div>
<div class="t" style="left:1158.40px;top:416.95px;font-size:13.6px;line-height:13.6px;font-weight:400;color:#2d2d2d;-webkit-text-stroke:0.2px #2d2d2d;">TP1200 Comfort</div>
<div class="t" style="left:988.30px;top:435.71px;font-size:13.6px;line-height:13.6px;font-weight:400;color:#2d2d2d;-webkit-text-stroke:0.2px #2d2d2d;">IP Address</div>
<div class="t" style="left:1158.40px;top:435.71px;font-size:13.6px;line-height:13.6px;font-weight:400;color:#2d2d2d;-webkit-text-stroke:0.2px #2d2d2d;">10.0.0.171</div>
<div class="t" style="left:988.30px;top:454.47px;font-size:13.6px;line-height:13.6px;font-weight:400;color:#2d2d2d;-webkit-text-stroke:0.2px #2d2d2d;">Subnet Mask</div>
<div class="t" style="left:1158.40px;top:454.47px;font-size:13.6px;line-height:13.6px;font-weight:400;color:#2d2d2d;-webkit-text-stroke:0.2px #2d2d2d;">255.255.255.0</div>
<div class="t" style="left:988.30px;top:473.23px;font-size:13.6px;line-height:13.6px;font-weight:400;color:#2d2d2d;-webkit-text-stroke:0.2px #2d2d2d;">Device ID</div>
<div class="t" style="left:1158.40px;top:473.23px;font-size:13.6px;line-height:13.6px;font-weight:400;color:#2d2d2d;-webkit-text-stroke:0.2px #2d2d2d;">0x040D</div>
<div class="t" style="left:988.30px;top:491.99px;font-size:13.6px;line-height:13.6px;font-weight:400;color:#2d2d2d;-webkit-text-stroke:0.2px #2d2d2d;">MAC Address</div>
<div class="t" style="left:1158.40px;top:491.99px;font-size:13.6px;line-height:13.6px;font-weight:400;color:#2d2d2d;-webkit-text-stroke:0.2px #2d2d2d;">ac:64:17:66:0c:5f</div>
<div class="t" style="left:988.30px;top:510.75px;font-size:13.6px;line-height:13.6px;font-weight:400;color:#2d2d2d;-webkit-text-stroke:0.2px #2d2d2d;">Role</div>
<div class="t" style="left:1158.40px;top:510.75px;font-size:13.6px;line-height:13.6px;font-weight:400;color:#2d2d2d;-webkit-text-stroke:0.2px #2d2d2d;">Unspecified</div>
<div class="t" style="left:988.30px;top:529.51px;font-size:13.6px;line-height:13.6px;font-weight:400;color:#2d2d2d;-webkit-text-stroke:0.2px #2d2d2d;">Gateway</div>
<div class="t" style="left:1158.40px;top:529.51px;font-size:13.6px;line-height:13.6px;font-weight:400;color:#2d2d2d;-webkit-text-stroke:0.2px #2d2d2d;">0.0.0.0</div>
<div class="t" style="left:988.30px;top:548.27px;font-size:13.6px;line-height:13.6px;font-weight:400;color:#2d2d2d;-webkit-text-stroke:0.2px #2d2d2d;">Vendor ID</div>
<div class="t" style="left:1158.40px;top:548.27px;font-size:13.6px;line-height:13.6px;font-weight:400;color:#2d2d2d;-webkit-text-stroke:0.2px #2d2d2d;">0x002A</div>
<div class="t" style="left:988.30px;top:567.03px;font-size:13.6px;line-height:13.6px;font-weight:400;color:#2d2d2d;-webkit-text-stroke:0.2px #2d2d2d;">Vendor Name</div>
<div class="t" style="left:1158.40px;top:567.03px;font-size:13.6px;line-height:13.6px;font-weight:400;color:#2d2d2d;-webkit-text-stroke:0.2px #2d2d2d;">SIEMENS AG</div>
<div class="t" style="left:988.30px;top:585.79px;font-size:13.6px;line-height:13.6px;font-weight:400;color:#2d2d2d;-webkit-text-stroke:0.2px #2d2d2d;">Status</div>
<div class="t" style="left:1158.40px;top:585.79px;font-size:13.6px;line-height:13.6px;font-weight:400;color:#2d2d2d;-webkit-text-stroke:0.2px #2d2d2d;">Ok</div>
<svg style="position:absolute;left:973px;top:622.8px" width="10.6" height="6" viewBox="0 0 10.6 6"><path d="M0.2 0.2 H9.799999999999999 L5.0 5.2 Z" fill="#5f7080"/></svg>
<div class="t" style="left:987.90px;top:616.71px;font-size:14.4px;line-height:14.4px;font-weight:400;color:#2d2d2d;-webkit-text-stroke:0.45px #2d2d2d;">Additional Identification &amp; Maintenance (I&amp;M) Data</div>
<div style="position:absolute;left:973px;top:635px;width:537px;height:1px;background:#8597a6;"></div>
<div class="t" style="left:988.30px;top:644.89px;font-size:13.6px;line-height:13.6px;font-weight:400;color:#2d2d2d;-webkit-text-stroke:0.2px #2d2d2d;">Hardware Revision</div>
<div class="t" style="left:1158.40px;top:644.89px;font-size:13.6px;line-height:13.6px;font-weight:400;color:#2d2d2d;-webkit-text-stroke:0.2px #2d2d2d;">0</div>
<div class="t" style="left:988.30px;top:663.49px;font-size:13.6px;line-height:13.6px;font-weight:400;color:#2d2d2d;-webkit-text-stroke:0.2px #2d2d2d;">Order Number</div>
<div class="t" style="left:1158.40px;top:663.49px;font-size:13.6px;line-height:13.6px;font-weight:400;color:#2d2d2d;-webkit-text-stroke:0.2px #2d2d2d;">6AV2 124-0MC01-0AX0</div>
<div class="t" style="left:988.30px;top:682.09px;font-size:13.6px;line-height:13.6px;font-weight:400;color:#2d2d2d;-webkit-text-stroke:0.2px #2d2d2d;">Firmware Version</div>
<div class="t" style="left:1158.40px;top:682.09px;font-size:13.6px;line-height:13.6px;font-weight:400;color:#2d2d2d;-webkit-text-stroke:0.2px #2d2d2d;">V17.0.0</div>
<svg style="position:absolute;left:973px;top:719px" width="10.6" height="6" viewBox="0 0 10.6 6"><path d="M0.2 0.2 H9.799999999999999 L5.0 5.2 Z" fill="#5f7080"/></svg>
<div class="t" style="left:987.90px;top:714.21px;font-size:14.4px;line-height:14.4px;font-weight:400;color:#2d2d2d;-webkit-text-stroke:0.45px #2d2d2d;">Ports</div>
<div style="position:absolute;left:973px;top:732px;width:537px;height:1px;background:#8597a6;"></div>
<svg style="position:absolute;left:989.3px;top:748.7px" width="10.6" height="6" viewBox="0 0 10.6 6"><path d="M0.2 0.2 H9.799999999999999 L5.0 5.2 Z" fill="#5f7080"/></svg>
<div class="t" style="left:1004.80px;top:743.11px;font-size:14.4px;line-height:14.4px;font-weight:400;color:#2d2d2d;-webkit-text-stroke:0.45px #2d2d2d;">test panel - port-001</div>
<div class="t" style="left:1005.50px;top:765.49px;font-size:13.6px;line-height:13.6px;font-weight:400;color:#2d2d2d;-webkit-text-stroke:0.2px #2d2d2d;">Port ID</div>
<div class="t" style="left:1158.40px;top:765.49px;font-size:13.6px;line-height:13.6px;font-weight:400;color:#2d2d2d;-webkit-text-stroke:0.2px #2d2d2d;">port-001</div>
<div class="t" style="left:1005.50px;top:784.42px;font-size:13.6px;line-height:13.6px;font-weight:400;color:#2d2d2d;-webkit-text-stroke:0.2px #2d2d2d;">Port Description</div>
<div class="t" style="left:1158.40px;top:784.42px;font-size:13.6px;line-height:13.6px;font-weight:400;color:#2d2d2d;-webkit-text-stroke:0.2px #2d2d2d;">SOC1 Port 1</div>
<div class="t" style="left:1005.50px;top:803.35px;font-size:13.6px;line-height:13.6px;font-weight:400;color:#2d2d2d;-webkit-text-stroke:0.2px #2d2d2d;">State</div>
<div class="t" style="left:1158.40px;top:803.35px;font-size:13.6px;line-height:13.6px;font-weight:400;color:#2d2d2d;-webkit-text-stroke:0.2px #2d2d2d;">Up</div>
<div class="t" style="left:1005.50px;top:822.28px;font-size:13.6px;line-height:13.6px;font-weight:400;color:#2d2d2d;-webkit-text-stroke:0.2px #2d2d2d;">Partner Port ID</div>
<div class="t" style="left:1158.40px;top:822.28px;font-size:13.6px;line-height:13.6px;font-weight:400;color:#2d2d2d;-webkit-text-stroke:0.2px #2d2d2d;">port-001</div>
<div class="t" style="left:1005.50px;top:841.21px;font-size:13.6px;line-height:13.6px;font-weight:400;color:#2d2d2d;-webkit-text-stroke:0.2px #2d2d2d;">Partner MAC Address</div>
<div class="t" style="left:1005.50px;top:860.14px;font-size:13.6px;line-height:13.6px;font-weight:400;color:#2d2d2d;-webkit-text-stroke:0.2px #2d2d2d;">Partner Device Name</div>
<div class="t" style="left:1158.40px;top:860.14px;font-size:13.6px;line-height:13.6px;font-weight:400;color:#2d2d2d;-webkit-text-stroke:0.2px #2d2d2d;">roy-w10-ltp</div>
<div class="t" style="left:1005.50px;top:879.07px;font-size:13.6px;line-height:13.6px;font-weight:400;color:#2d2d2d;-webkit-text-stroke:0.2px #2d2d2d;">Cable Delay [ns]</div>
<div class="t" style="left:1158.40px;top:879.07px;font-size:13.6px;line-height:13.6px;font-weight:400;color:#2d2d2d;-webkit-text-stroke:0.2px #2d2d2d;">0</div>
<div class="t" style="left:1005.50px;top:898.00px;font-size:13.6px;line-height:13.6px;font-weight:400;color:#2d2d2d;-webkit-text-stroke:0.2px #2d2d2d;">Error Frames</div>
<div class="t" style="left:1158.40px;top:898.00px;font-size:13.6px;line-height:13.6px;font-weight:400;color:#2d2d2d;-webkit-text-stroke:0.2px #2d2d2d;">0</div>
<div class="t" style="left:1005.50px;top:916.93px;font-size:13.6px;line-height:13.6px;font-weight:400;color:#2d2d2d;-webkit-text-stroke:0.2px #2d2d2d;">MAU Type</div>
<div class="t" style="left:1158.40px;top:916.93px;font-size:13.6px;line-height:13.6px;font-weight:400;color:#2d2d2d;-webkit-text-stroke:0.2px #2d2d2d;">100Base-TX-FD</div>
<div class="t" style="left:1005.50px;top:935.86px;font-size:13.6px;line-height:13.6px;font-weight:400;color:#2d2d2d;-webkit-text-stroke:0.2px #2d2d2d;">Medium Type</div>
<div class="t" style="left:1158.40px;top:935.86px;font-size:13.6px;line-height:13.6px;font-weight:400;color:#2d2d2d;-webkit-text-stroke:0.2px #2d2d2d;">Copper Cable</div>
<svg style="position:absolute;left:989.3px;top:962px" width="10.6" height="6" viewBox="0 0 10.6 6"><path d="M0.2 0.2 H9.799999999999999 L5.0 5.2 Z" fill="#5f7080"/></svg>
<div class="t" style="left:1004.80px;top:956.31px;font-size:14.4px;line-height:14.4px;font-weight:400;color:#2d2d2d;-webkit-text-stroke:0.45px #2d2d2d;">test panel - port-002</div>
<div class="t" style="left:1005.50px;top:978.89px;font-size:13.6px;line-height:13.6px;font-weight:400;color:#2d2d2d;-webkit-text-stroke:0.2px #2d2d2d;">Port ID</div>
<div class="t" style="left:1158.40px;top:978.89px;font-size:13.6px;line-height:13.6px;font-weight:400;color:#2d2d2d;-webkit-text-stroke:0.2px #2d2d2d;">port-002</div>
<div class="t" style="left:1005.50px;top:997.94px;font-size:13.6px;line-height:13.6px;font-weight:400;color:#2d2d2d;-webkit-text-stroke:0.2px #2d2d2d;">Port Description</div>
<div class="t" style="left:1158.40px;top:997.94px;font-size:13.6px;line-height:13.6px;font-weight:400;color:#2d2d2d;-webkit-text-stroke:0.2px #2d2d2d;">SOC1 Port 2</div>
<div class="t" style="left:1005.50px;top:1016.99px;font-size:13.6px;line-height:13.6px;font-weight:400;color:#2d2d2d;-webkit-text-stroke:0.2px #2d2d2d;">State</div>
<div class="t" style="left:1158.40px;top:1016.99px;font-size:13.6px;line-height:13.6px;font-weight:400;color:#2d2d2d;-webkit-text-stroke:0.2px #2d2d2d;">Up</div>
<svg style="position:absolute;left:973px;top:1053.6px" width="10.6" height="6" viewBox="0 0 10.6 6"><path d="M0.2 0.2 H9.799999999999999 L5.0 5.2 Z" fill="#5f7080"/></svg>
<div class="t" style="left:987.90px;top:1047.51px;font-size:14.4px;line-height:14.4px;font-weight:400;color:#2d2d2d;-webkit-text-stroke:0.45px #2d2d2d;">Diagnostic Status</div>
<div style="position:absolute;left:973px;top:1066px;width:537px;height:1px;background:#8597a6;"></div>
<div class="t" style="left:987.60px;top:1074.06px;font-size:14.1px;line-height:14.1px;font-weight:400;color:#2d2d2d;-webkit-text-stroke:0.2px #2d2d2d;">Diagnostic buffer is not supported</div>
<div style="position:absolute;left:954px;top:588px;width:8px;height:70px;background:linear-gradient(to right,#eef2f5,#c5d0d9)"></div>
<div style="position:absolute;left:954px;top:588px;width:8px;height:1px;background:#8597a6;"></div>
<div style="position:absolute;left:954px;top:623px;width:8px;height:1px;background:#8597a6;"></div>
<div style="position:absolute;left:954px;top:658px;width:8px;height:1px;background:#8597a6;"></div>
<svg style="position:absolute;left:954px;top:600px" width="8" height="12" viewBox="0 0 8 12"><path d="M6 1.3 V10.8 L1 6 Z" fill="#2a2a2a"/></svg>
<svg style="position:absolute;left:955px;top:635px" width="8" height="12" viewBox="0 0 8 12"><path d="M1 1 V11 L6 6 Z" fill="#2a2a2a"/></svg>
</body></html>
